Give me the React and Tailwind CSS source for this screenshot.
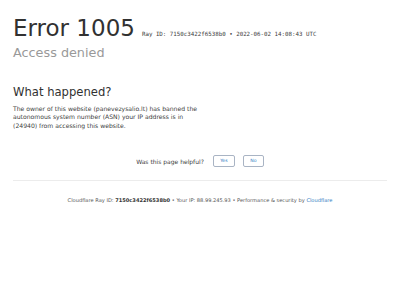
export default function App() {
  return (
    <div className="w-[400px] h-[300px] bg-white text-[#404040] px-[13px] pt-[14px]" style={{ fontFamily: '"DejaVu Sans", sans-serif' }}>
      <div className="flex items-end gap-[7px]">
        <h1 className="text-[23px] leading-[28px] text-[#313131]">Error 1005</h1>
        <span className="text-[5.8px] leading-[10px] mb-[3px] text-[#404040]" style={{ fontFamily: '"DejaVu Sans Mono", monospace' }}>
          Ray ID: 7150c3422f6538b0 • 2022-06-02 14:08:43 UTC
        </span>
      </div>
      <h2 className="mt-[3px] text-[12.8px] leading-[16px] text-[#999999]">Access denied</h2>

      <h2 className="mt-[24px] text-[11.6px] leading-[14px] text-[#313131]">What happened?</h2>
      <p className="mt-[6px] w-[190px] text-[6.1px] leading-[8.4px] text-[#404040]">
        The owner of this website (panevezysalio.lt) has banned the autonomous system number (ASN) your IP address is in (24940) from accessing this website.
      </p>

      <div className="mt-[25px] flex items-center justify-center gap-[8px] text-[6px]">
        <span>Was this page helpful?</span>
        <button className="ml-[1px] w-[22px] h-[12px] border border-[#a9b4c4] rounded-[2px] text-[4.6px] text-[#2f7bbf]">Yes</button>
        <button className="w-[21px] h-[12px] border border-[#a9b4c4] rounded-[2px] text-[4.6px] text-[#2f7bbf]">No</button>
      </div>

      <div className="mt-[13px] border-t border-[#ececec]" />

      <p className="mt-[15px] text-center text-[5.1px] leading-[8px] text-[#555]">
        Cloudflare Ray ID: <strong className="font-bold text-[#333]">7150c3422f6538b0</strong> • Your IP: 88.99.245.93 • Performance &amp; security by <span className="text-[#2f7bbf]">Cloudflare</span>
      </p>
    </div>
  );
}
